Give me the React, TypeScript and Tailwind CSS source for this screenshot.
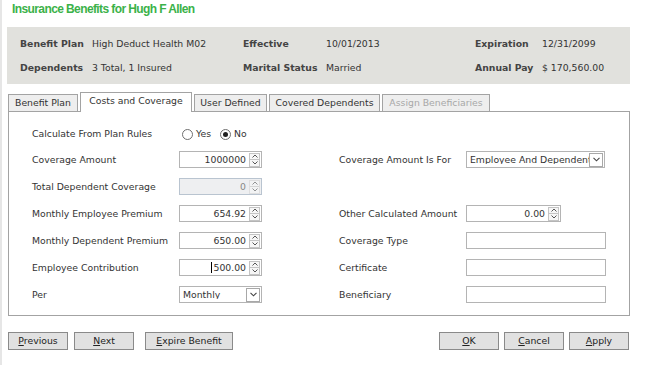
import React from "react";

const Caret = ({ up }: { up?: boolean }) => (
  <svg width="6" height="4" viewBox="0 0 6 4" className="block">
    {up ? (
      <path d="M0.5 3.5 L3 1 L5.5 3.5" fill="none" stroke="#555" strokeWidth="1" />
    ) : (
      <path d="M0.5 0.5 L3 3 L5.5 0.5" fill="none" stroke="#555" strokeWidth="1" />
    )}
  </svg>
);

const Spin = ({ disabled }: { disabled?: boolean }) => (
  <div
    className={`flex h-[14px] w-[11px] flex-col border ${
      disabled ? "border-[#d4d4d4] opacity-60" : "border-[#c4c4c4]"
    } bg-[#f6f6f6]`}
  >
    <div className="flex flex-1 items-center justify-center border-b border-[#c4c4c4]">
      <Caret up />
    </div>
    <div className="flex flex-1 items-center justify-center">
      <Caret />
    </div>
  </div>
);

const NumInput = ({
  value,
  disabled,
  cursor,
  w = "w-[83px]",
}: {
  value: string;
  disabled?: boolean;
  cursor?: boolean;
  w?: string;
}) => (
  <div
    className={`flex h-[17px] ${w} items-center border pr-[1px] ${
      disabled ? "border-[#b9c4d0] bg-[#eeeff1] text-[#888]" : "border-[#b4b4b4] bg-white"
    }`}
  >
    <div className="flex flex-1 items-center justify-end pr-[3px]">
      {cursor && <span className="mr-[1px] inline-block h-[11px] w-[1px] bg-black" />}
      <span>{value}</span>
    </div>
    <Spin disabled={disabled} />
  </div>
);

const Select = ({ value, w }: { value: string; w: string }) => (
  <div className={`flex h-[17px] ${w} items-center border border-[#b4b4b4] bg-white pl-[3px] pr-[1px]`}>
    <div className="flex-1 overflow-hidden whitespace-nowrap">{value}</div>
    <div className="flex h-[14px] w-[14px] shrink-0 items-center justify-center border border-[#a8a8a8] bg-white">
      <svg width="7" height="5" viewBox="0 0 7 5">
        <path d="M0.5 0.8 L3.5 3.8 L6.5 0.8" fill="none" stroke="#444" strokeWidth="1.1" />
      </svg>
    </div>
  </div>
);

const TextBox = ({ w = "w-[140px]" }: { w?: string }) => (
  <div className={`h-[17px] ${w} border border-[#b4b4b4] bg-white`} />
);

const Radio = ({ checked }: { checked?: boolean }) => (
  <span className="flex h-[11px] w-[11px] items-center justify-center rounded-full border border-[#6f6f6f] bg-white">
    {checked && <span className="h-[5px] w-[5px] rounded-full bg-[#222]" />}
  </span>
);

const Btn = ({ label, u, w = "w-[60px]" }: { label: string; u: number; w?: string }) => (
  <div
    className={`flex h-[18px] ${w} items-center justify-center border border-[#8a8a8a] bg-[#e1e1e1] text-[#222]`}
  >
    <span>
      {label.slice(0, u)}
      <span className="underline">{label[u]}</span>
      {label.slice(u + 1)}
    </span>
  </div>
);

export default function App() {
  const tabs = [
    { t: "Benefit Plan", w: "w-[70px]" },
    { t: "Costs and Coverage", w: "w-[112px]", active: true },
    { t: "User Defined", w: "w-[73px]" },
    { t: "Covered Dependents", w: "w-[111px]" },
    { t: "Assign Beneficiaries", w: "w-[108px]", disabled: true },
  ];

  return (
    <div className="h-[365px] w-[651px] overflow-hidden border-l-2 border-[#e6e6e6] bg-white font-['DejaVu_Sans',sans-serif] text-[9.3px] leading-none text-[#333]">
      {/* Title */}
      <div className="flex h-[27px] items-start pl-[10px] pt-[3px]">
        <span className="font-['Liberation_Sans',Arial,sans-serif] text-[12px] font-bold leading-[12px] tracking-[-0.6px] text-[#3bb249]">
          Insurance Benefits for Hugh F Allen
        </span>
      </div>

      {/* Header summary */}
      <div className="ml-[5px] grid h-[57px] w-[623px] grid-cols-[72px_151px_83px_149px_67px_1fr] grid-rows-[24px_24px] items-center bg-[#e1e1dd] pl-[13px] pt-[5px]">
        <span className="font-bold text-[#444]">Benefit Plan</span>
        <span>High Deduct Health M02</span>
        <span className="font-bold text-[#444]">Effective</span>
        <span>10/01/2013</span>
        <span className="font-bold text-[#444]">Expiration</span>
        <span>12/31/2099</span>
        <span className="font-bold text-[#444]">Dependents</span>
        <span>3 Total, 1 Insured</span>
        <span className="font-bold text-[#444]">Marital Status</span>
        <span>Married</span>
        <span className="font-bold text-[#444]">Annual Pay</span>
        <span>$ 170,560.00</span>
      </div>

      {/* Tabs */}
      <div className="ml-[6px] mt-[8px] flex h-[19px] items-end gap-[2px]">
        {tabs.map((tab) => (
          <div
            key={tab.t}
            className={`flex ${tab.w} items-center justify-center border border-b-0 border-[#a3a3a3] ${
              tab.active
                ? "relative z-10 -mb-[1px] h-[20px] bg-white pb-[3px]"
                : "h-[17px] bg-[#eeeeee]"
            } ${tab.disabled ? "text-[#a8a8a8]" : "text-[#333]"}`}
          >
            {tab.t}
          </div>
        ))}
      </div>

      {/* Content panel */}
      <div className="ml-[6px] h-[205px] w-[622px] border border-[#a3a3a3] bg-white pl-[23px] pt-[10px]">
        <div className="grid grid-cols-[147px_160px_127px_1fr] grid-rows-[24px_27px_27px_27px_27px_27px_27px] items-center">
          <span>Calculate From Plan Rules</span>
          <div className="flex items-center pl-[3px]">
            <Radio />
            <span className="ml-[3px] mr-[9px]">Yes</span>
            <Radio checked />
            <span className="ml-[3px]">No</span>
          </div>
          <span />
          <span />

          <span>Coverage Amount</span>
          <NumInput value="1000000" />
          <span>Coverage Amount Is For</span>
          <Select value="Employee And Dependent" w="w-[139px]" />

          <span>Total Dependent Coverage</span>
          <NumInput value="0" disabled />
          <span />
          <span />

          <span>Monthly Employee Premium</span>
          <NumInput value="654.92" />
          <span>Other Calculated Amount</span>
          <NumInput value="0.00" w="w-[95px]" />

          <span>Monthly Dependent Premium</span>
          <NumInput value="650.00" />
          <span>Coverage Type</span>
          <TextBox w="w-[140px]" />

          <span>Employee Contribution</span>
          <NumInput value="500.00" cursor />
          <span>Certificate</span>
          <TextBox w="w-[140px]" />

          <span>Per</span>
          <Select value="Monthly" w="w-[83px]" />
          <span>Beneficiary</span>
          <TextBox w="w-[140px]" />
        </div>
      </div>

      {/* Buttons */}
      <div className="ml-[6px] mt-[16px] flex w-[621px] items-center">
        <Btn label="Previous" u={0} />
        <div className="w-[6px]" />
        <Btn label="Next" u={0} />
        <div className="w-[11px]" />
        <Btn label="Expire Benefit" u={0} w="w-[88px]" />
        <div className="flex-1" />
        <Btn label="OK" u={0} />
        <div className="w-[5px]" />
        <Btn label="Cancel" u={0} />
        <div className="w-[5px]" />
        <Btn label="Apply" u={0} />
      </div>
    </div>
  );
}
